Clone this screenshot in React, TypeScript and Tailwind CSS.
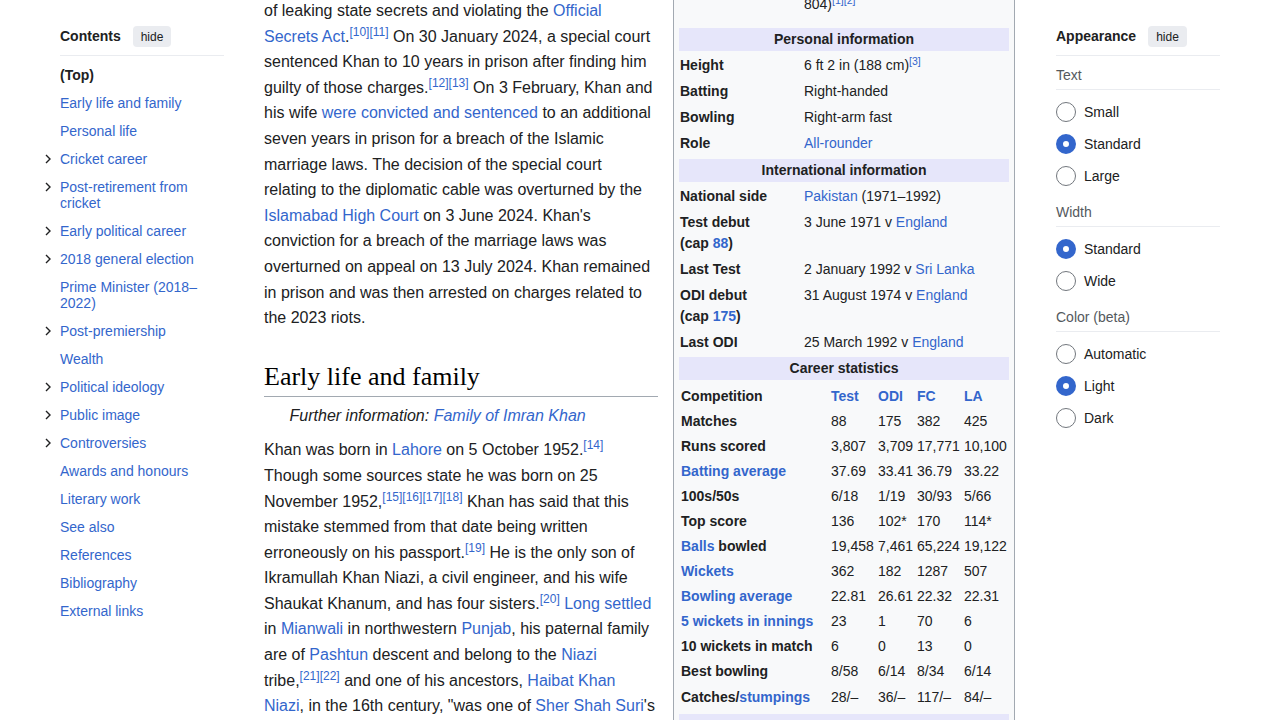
import React from "react";

type Kids = { children?: React.ReactNode; className?: string };

const L = ({ children, className = "" }: Kids) => (
  <a href="#" className={"text-[#3366cc] " + className}>
    {children}
  </a>
);

const Ref = ({ n }: { n: string[] }) => (
  <sup className="text-[#3366cc] whitespace-nowrap">
    {n.map((x) => (
      <span key={x}>[{x}]</span>
    ))}
  </sup>
);

const Chevron = () => (
  <svg width="8" height="10" viewBox="0 0 8 10" className="mt-[3px]">
    <path d="M2 1l4 4-4 4" fill="none" stroke="#202122" strokeWidth="1.4" />
  </svg>
);

const toc: [string, boolean][] = [
  ["Early life and family", false],
  ["Personal life", false],
  ["Cricket career", true],
  ["Post-retirement from cricket", true],
  ["Early political career", true],
  ["2018 general election", true],
  ["Prime Minister (2018–2022)", false],
  ["Post-premiership", true],
  ["Wealth", false],
  ["Political ideology", true],
  ["Public image", true],
  ["Controversies", true],
  ["Awards and honours", false],
  ["Literary work", false],
  ["See also", false],
  ["References", false],
  ["Bibliography", false],
  ["External links", false],
];

function PanelHeader({ title }: { title: string }) {
  return (
    <div className="flex items-center gap-3 pb-[8px] border-b border-[#eaecf0]">
      <span className="font-bold text-[14px] leading-[21px]">{title}</span>
      <button className="h-[21px] px-2 rounded-sm bg-[#eaecf0] text-[12px] text-[#202122]">hide</button>
    </div>
  );
}

function Toc() {
  return (
    <nav className="ml-[60px] w-[164px] shrink-0 pt-[26px] text-[14px]">
      <PanelHeader title="Contents" />
      <ul className="mt-[5px]">
        <li className="py-[6px] leading-4 font-bold">(Top)</li>
        {toc.map(([label, sub]) => (
          <li key={label} className="flex -ml-4 py-[6px] leading-4">
            <span className="w-4 shrink-0">{sub && <Chevron />}</span>
            <L>{label}</L>
          </li>
        ))}
      </ul>
    </nav>
  );
}

function Article() {
  return (
    <main className="ml-[40px] w-[394px] shrink-0 -mt-[2px] text-[16px] leading-[1.6]">
      <p>
        of leaking state secrets and violating the <L>Official Secrets Act</L>.<Ref n={["10", "11"]} /> On 30 January
        2024, a special court sentenced Khan to 10 years in prison after finding him guilty of those charges.
        <Ref n={["12", "13"]} /> On 3 February, Khan and his wife <L>were convicted and sentenced</L> to an additional
        seven years in prison for a breach of the Islamic marriage laws. The decision of the special court relating to
        the diplomatic cable was overturned by the <L>Islamabad High Court</L> on 3 June 2024. Khan's conviction for a
        breach of the marriage laws was overturned on appeal on 13 July 2024. Khan remained in prison and was then
        arrested on charges related to the 2023 riots.
      </p>
      <h2 className="mt-[28px] pb-[1px] border-b border-[#a2a9b1] font-['Liberation_Serif',Georgia,serif] text-[26px] leading-[36px] text-black">
        Early life and family
      </h2>
      <div className="mt-[6px] mb-[9px] pl-[25.6px] italic">
        Further information: <L>Family of Imran Khan</L>
      </div>
      <p>
        Khan was born in <L>Lahore</L> on 5 October 1952.<Ref n={["14"]} /> Though some sources state he was born on 25
        November 1952,<Ref n={["15", "16", "17", "18"]} /> Khan has said that this mistake stemmed from that date being
        written erroneously on his passport.<Ref n={["19"]} /> He is the only son of Ikramullah Khan Niazi, a civil
        engineer, and his wife Shaukat Khanum, and has four sisters.<Ref n={["20"]} /> <L>Long settled</L> in{" "}
        <L>Mianwali</L> in northwestern <L>Punjab</L>, his paternal family are of <L>Pashtun</L> descent and belong to
        the <L>Niazi</L>{" "}
        <span className="whitespace-nowrap">
          tribe,<Ref n={["21", "22"]} />
        </span>{" "}
        and one of his ancestors, <L>Haibat Khan Niazi</L>, in the 16th century, "was one of <L>Sher Shah Suri</L>'s
        leading generals, as well as being the governor of Punjab province."
      </p>
    </main>
  );
}

const Head = ({ children, className = "" }: Kids) => (
  <div className={"bg-[#e6e6fa] py-[1px] leading-[21px] text-center font-bold " + className}>{children}</div>
);

const Row = ({ label, children }: { label: React.ReactNode; children: React.ReactNode }) => (
  <div className="grid grid-cols-[124px_1fr] pl-[1px] py-[1px] leading-[21px]">
    <div className="font-bold">{label}</div>
    <div>{children}</div>
  </div>
);

const stats: [React.ReactNode, string[]][] = [
  ["Matches", ["88", "175", "382", "425"]],
  ["Runs scored", ["3,807", "3,709", "17,771", "10,100"]],
  [<L>Batting average</L>, ["37.69", "33.41", "36.79", "33.22"]],
  ["100s/50s", ["6/18", "1/19", "30/93", "5/66"]],
  ["Top score", ["136", "102*", "170", "114*"]],
  [<><L>Balls</L> bowled</>, ["19,458", "7,461", "65,224", "19,122"]],
  [<L>Wickets</L>, ["362", "182", "1287", "507"]],
  [<L>Bowling average</L>, ["22.81", "26.61", "22.32", "22.31"]],
  [<L>5 wickets in innings</L>, ["23", "1", "70", "6"]],
  ["10 wickets in match", ["6", "0", "13", "0"]],
  ["Best bowling", ["8/58", "6/14", "8/34", "6/14"]],
  [<>Catches/<L>stumpings</L></>, ["28/–", "36/–", "117/–", "84/–"]],
];

function Infobox() {
  return (
    <aside className="ml-[15px] w-[342px] shrink-0 -mt-[8px] border border-[#a2a9b1] bg-[#f8f9fa] px-[5px] text-[14px]">
      <div className="flex flex-col gap-[3px]">
        <Row label="">
          804)<Ref n={["1", "2"]} />
        </Row>
        <Head className="mt-[9px]">Personal information</Head>
        <Row label="Height">
          6 ft 2 in (188 cm)<Ref n={["3"]} />
        </Row>
        <Row label="Batting">Right-handed</Row>
        <Row label="Bowling">Right-arm fast</Row>
        <Row label="Role">
          <L>All-rounder</L>
        </Row>
        <Head className="mt-[1px]">International information</Head>
        <Row label="National side">
          <L>Pakistan</L> (1971–1992)
        </Row>
        <Row
          label={
            <>
              Test debut
              <br />
              (cap <L>88</L>)
            </>
          }
        >
          3 June 1971 v <L>England</L>
        </Row>
        <Row label="Last Test">
          2 January 1992 v <L>Sri Lanka</L>
        </Row>
        <Row
          label={
            <>
              ODI debut
              <br />
              (cap <L>175</L>)
            </>
          }
        >
          31 August 1974 v <L>England</L>
        </Row>
        <Row label="Last ODI">
          25 March 1992 v <L>England</L>
        </Row>
        <Head>Career statistics</Head>
        <div className="mt-[0.5px] mb-[1px] pl-[2px]">
          <div className="grid grid-cols-[150px_47px_39px_47px_1fr] h-[25px] items-center font-bold">
            <div>Competition</div>
            <L>Test</L>
            <L>ODI</L>
            <L>FC</L>
            <L>LA</L>
          </div>
          {stats.map(([label, vals], i) => (
            <div key={i} className="grid grid-cols-[150px_47px_39px_47px_1fr] h-[25.1px] items-center">
              <div className="font-bold">{label}</div>
              {vals.map((v, j) => (
                <div key={j} className="whitespace-nowrap">
                  {v}
                </div>
              ))}
            </div>
          ))}
        </div>
        <div className="bg-[#e6e6fa] py-[1px] leading-[21px] text-right pr-[6px] text-[12px]">
          [<L>hide</L>]
        </div>
      </div>
    </aside>
  );
}

const Radio = ({ label, on = false }: { label: string; on?: boolean }) => (
  <label className="flex items-center gap-2 h-[32px]">
    <span
      className={
        on
          ? "w-5 h-5 rounded-full border-[7px] border-[#3366cc] bg-white"
          : "w-5 h-5 rounded-full border border-[#72777d] bg-white"
      }
    />
    <span>{label}</span>
  </label>
);

const Group = ({ title, children }: { title: string; children: React.ReactNode }) => (
  <div>
    <div className="mt-[12px] pb-[6px] border-b border-[#eaecf0] leading-4 text-[#54595d]">{title}</div>
    <div className="mt-[6px]">{children}</div>
  </div>
);

function Appearance() {
  return (
    <aside className="ml-[41px] w-[164px] shrink-0 pt-[26px] text-[14px]">
      <PanelHeader title="Appearance" />
      <div className="-mt-[1px]">
        <Group title="Text">
          <Radio label="Small" />
          <Radio label="Standard" on />
          <Radio label="Large" />
        </Group>
        <Group title="Width">
          <Radio label="Standard" on />
          <Radio label="Wide" />
        </Group>
        <Group title="Color (beta)">
          <Radio label="Automatic" />
          <Radio label="Light" on />
          <Radio label="Dark" />
        </Group>
      </div>
    </aside>
  );
}

export default function App() {
  return (
    <div className="w-[1280px] h-[720px] overflow-hidden bg-white text-[#202122] font-['Liberation_Sans',Arial,sans-serif] flex items-start">
      <Toc />
      <Article />
      <Infobox />
      <Appearance />
    </div>
  );
}
